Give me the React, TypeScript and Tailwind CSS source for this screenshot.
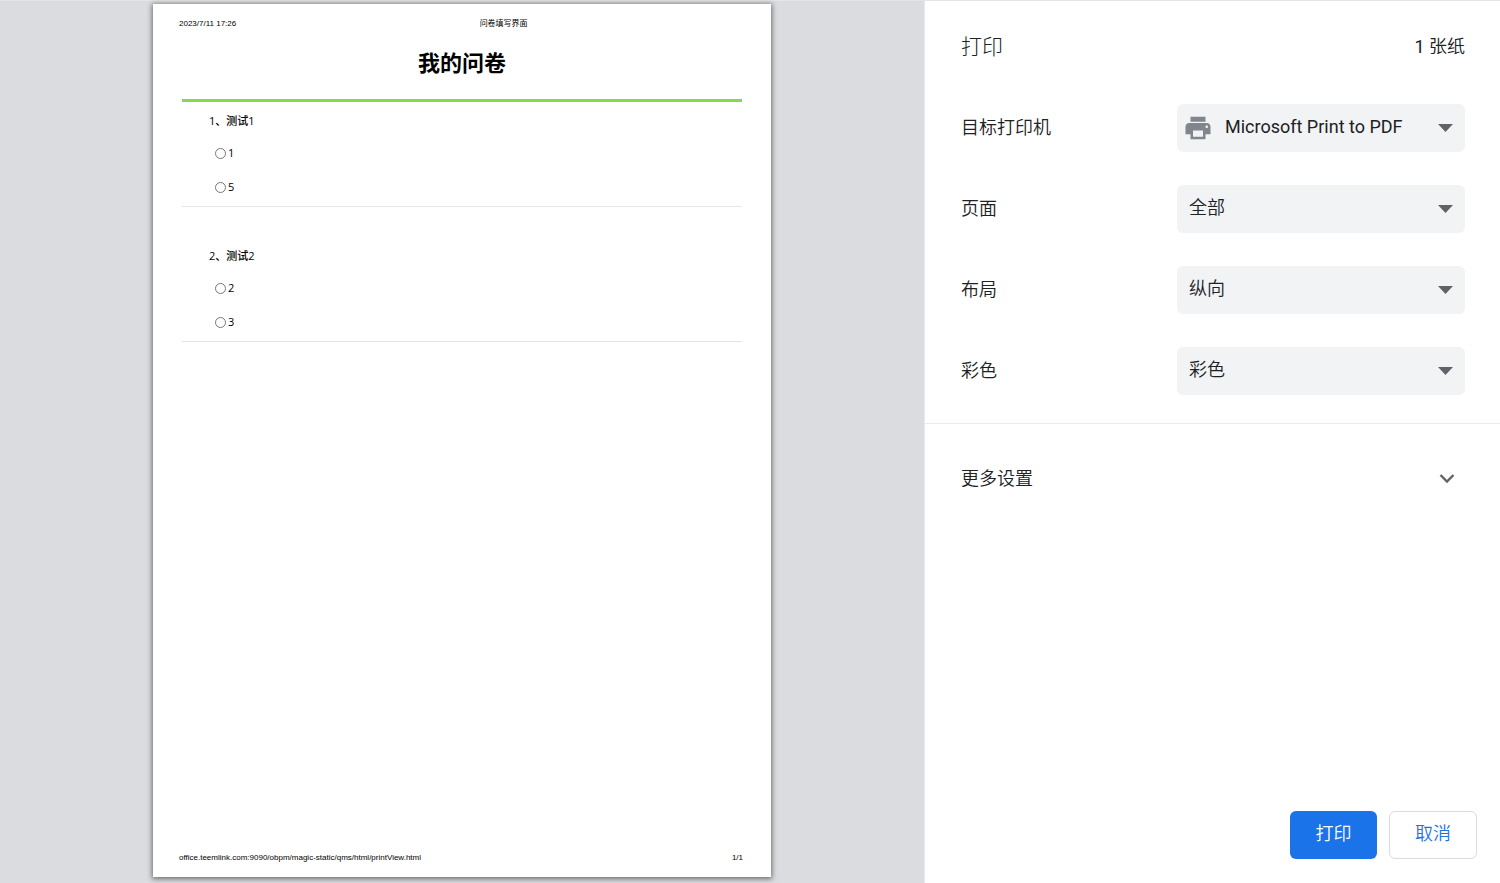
import React, { useState } from 'react';
import { MdPrint } from 'react-icons/md';

interface Question {
  id: number;
  title: string;
  options: string[];
}

interface Setting {
  id: string;
  label: string;
  options: string[];
  printer?: boolean;
}

const questions: Question[] = [
  { id: 1, title: '测试1', options: ['1', '5'] },
  { id: 2, title: '测试2', options: ['2', '3'] },
];

const settings: Setting[] = [
  { id: 'destination', label: '目标打印机', options: ['Microsoft Print to PDF'], printer: true },
  { id: 'pages', label: '页面', options: ['全部'] },
  { id: 'layout', label: '布局', options: ['纵向'] },
  { id: 'color', label: '彩色', options: ['彩色'] },
];

const QuestionBlock: React.FC<{ question: Question }> = ({ question }) => (
  <fieldset className="border-b border-[#e5e5e5] pt-2.5 pb-0.5 pl-[27px]">
    <legend className="float-left w-full text-[11px] leading-[18px] font-medium">
      {question.id}、{question.title}
    </legend>
    <div className="clear-both pt-1.5 pl-1.5">
      {question.options.map((option) => (
        <label key={option} className="flex h-[34px] items-center gap-0.5 text-[11px] font-medium">
          <input
            type="radio"
            name={`question-${question.id}`}
            className="h-[11px] w-[11px] appearance-none rounded-full border border-[#767676] bg-white checked:bg-[#767676]"
          />
          {option}
        </label>
      ))}
    </div>
  </fieldset>
);

const Sheet: React.FC = () => (
  <article className="flex aspect-[618/873] h-full flex-col bg-white text-black shadow-[0_1px_5px_1px_rgba(0,0,0,0.5)]">
    <header className="flex pt-3.5 pl-[26px] font-['Liberation_Sans','Noto_Sans_CJK_SC',sans-serif] text-[8px] leading-3">
      <span>2023/7/11 17:26</span>
      <span className="flex-1 text-center">问卷填写界面</span>
    </header>
    <main className="flex-1 px-[29px] pt-4 font-['Open_Sans','Noto_Sans_CJK_SC',sans-serif]">
      <h1 className="border-b-3 border-[#89d84b] pb-[21px] text-center text-[22px] leading-8 font-bold">
        我的问卷
      </h1>
      <div className="flex flex-col gap-[30px]">
        {questions.map((question) => (
          <QuestionBlock key={question.id} question={question} />
        ))}
      </div>
    </main>
    <footer className="flex justify-between pr-7 pb-[13px] pl-[26px] font-['Liberation_Sans',sans-serif] text-[8px] leading-3">
      <span>office.teemlink.com:9090/obpm/magic-static/qms/html/printView.html</span>
      <span>1/1</span>
    </footer>
  </article>
);

const SettingRow: React.FC<{ setting: Setting }> = ({ setting }) => (
  <div className="flex items-center justify-between">
    <label htmlFor={setting.id}>{setting.label}</label>
    <div className="relative w-72">
      {setting.printer && (
        <MdPrint className="pointer-events-none absolute top-[9px] left-1.5 h-[30px] w-[30px] text-[#80868b]" />
      )}
      <select
        id={setting.id}
        className={`h-12 w-full appearance-none rounded-md bg-[#f1f3f4] pr-10 pb-0.5 ${
          setting.printer ? 'pl-12 font-normal' : 'pl-3'
        }`}
      >
        {setting.options.map((option) => (
          <option key={option}>{option}</option>
        ))}
      </select>
      <svg
        viewBox="0 0 15 8"
        className="pointer-events-none absolute top-5 right-3 h-2 w-[15px] fill-[#5f6368]"
      >
        <path d="M0 0h15L7.5 8z" />
      </svg>
    </div>
  </div>
);

const App: React.FC = () => {
  const [expanded, setExpanded] = useState(false);

  return (
    <div className="flex h-screen border-t border-[#e4e4e4] bg-white">
      <section className="flex flex-1 justify-center bg-[#dadce0] pt-[3px] pb-1.5">
        <Sheet />
      </section>

      <aside className="flex w-[576px] flex-col border-l border-[#e8eaed] font-['Roboto','Noto_Sans_CJK_SC',sans-serif] text-lg font-[350] text-[#202124]">
        <header className="flex items-center justify-between pt-8 pr-[35px] pl-9 leading-7">
          <h1 className="text-[21px] font-light">打印</h1>
          <span>
            <span className="font-normal">1</span> 张纸
          </span>
        </header>

        <div className="flex flex-col gap-[33px] border-b border-[#e8eaed] pt-[43px] pr-[35px] pb-7 pl-9">
          {settings.map((setting) => (
            <SettingRow key={setting.id} setting={setting} />
          ))}
        </div>

        <button
          type="button"
          aria-expanded={expanded}
          onClick={() => setExpanded(!expanded)}
          className="mt-[31px] flex h-12 items-center justify-between pr-[45px] pl-9"
        >
          更多设置
          <svg viewBox="0 0 16 10" className="h-2.5 w-4 fill-none stroke-[#5f6368] stroke-[2.4]">
            <path d="M1.5 1l6.5 6.5L14.5 1" />
          </svg>
        </button>

        <footer className="mt-auto flex justify-end gap-3 pr-[23px] pb-6">
          <button type="button" className="h-12 w-[87px] rounded-md bg-[#1a73e8] pb-0.5 text-white">
            打印
          </button>
          <button
            type="button"
            className="h-12 w-[88px] rounded-md border border-[#dadce0] pb-0.5 text-[#1a73e8]"
          >
            取消
          </button>
        </footer>
      </aside>
    </div>
  );
};

export default App;
